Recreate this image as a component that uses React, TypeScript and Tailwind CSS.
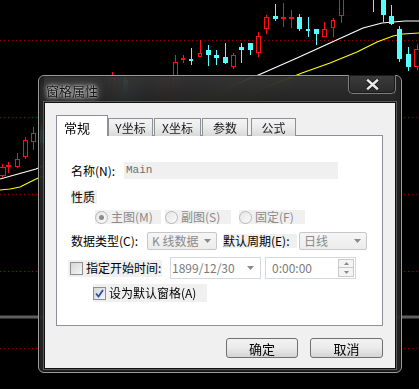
import React from 'react'

type Candle = [number, number, number, number, number, number, 'r' | 'c']

// x, width, bodyTop, bodyBottom, wickTop, wickBottom, colour
const candles: Candle[] = [
  [-1, 7, 167, 176, 164, 178, 'r'],
  [6, 5, 165, 167, 162, 173, 'r'],
  [15, 5, 159, 167, 153, 168, 'r'],
  [23, 5, 140, 157, 137, 159, 'r'],
  [31, 5, 133, 142, 127, 150, 'r'],
  [39, 5, 130, 143, 124, 148, 'c'],
  [109, 6, 78, 104, 72, 108, 'r'],
  [123, 5, 80, 104, 76, 108, 'c'],
  [161, 6, 82, 104, 78, 108, 'r'],
  [173, 5, 62, 90, 55, 95, 'r'],
  [181, 4, 58, 60, 55, 63, 'r'],
  [189, 4, 59, 60, 48, 65, 'c'],
  [198, 4, 53, 57, 40, 57, 'r'],
  [206, 5, 50, 55, 45, 66, 'c'],
  [214, 5, 55, 58, 50, 65, 'c'],
  [223, 5, 57, 63, 43, 64, 'c'],
  [231, 5, 55, 67, 53, 69, 'r'],
  [239, 5, 47, 50, 43, 63, 'c'],
  [248, 5, 43, 50, 43, 55, 'c'],
  [256, 5, 36, 53, 32, 57, 'r'],
  [264, 5, 17, 29, 15, 34, 'r'],
  [273, 5, 16, 19, 4, 21, 'c'],
  [281, 5, 17, 18, 3, 27, 'r'],
  [289, 5, 17, 18, 10, 28, 'r'],
  [297, 5, 17, 29, 14, 31, 'c'],
  [306, 4, 29, 31, 17, 37, 'c'],
  [314, 5, 29, 34, 29, 45, 'c'],
  [322, 5, 29, 37, 22, 37, 'r'],
  [331, 4, 20, 28, 18, 37, 'r'],
  [339, 5, -2, 16, -2, 23, 'r'],
  [372, 3, -2, -1, -2, 12, 'c'],
  [381, 5, -2, 15, -2, 22, 'c'],
  [389, 5, 16, 24, 5, 25, 'c'],
  [397, 5, 29, 59, 26, 62, 'c'],
  [406, 5, 54, 67, 47, 71, 'c'],
  [414, 6, 49, 67, 44, 70, 'r'],
]

const whiteLine = '0,179 36,169 263,73 297,58 330,43 363,28 382,23 405,21 419,21'
const yellowLine = '0,190 10,189 20,187 36,179 302,73 330,63 357,52 377,42 393,36 403,34 419,33'

function Chart() {
  return (
    <svg className="absolute left-0 top-0" width={419} height={389} viewBox="0 0 419 389">
      {[40, 117, 194, 271, 348].map((y) => (
        <line key={y} x1={0} x2={419} y1={y + 0.5} y2={y + 0.5} stroke="#9a0000" strokeDasharray="1 3" />
      ))}
      <line x1={0} x2={419} y1={317} y2={317} stroke="#5e5e5e" strokeWidth={3} />
      <polyline points={whiteLine} fill="none" stroke="#ffffff" strokeWidth={1.2} />
      <polyline points={yellowLine} fill="none" stroke="#ffff00" strokeWidth={1.2} />
      {candles.map(([x, w, top, bottom, wt, wb, c], i) => {
        const mid = x + Math.floor(w / 2) + 0.5
        const color = c === 'r' ? '#ff1010' : '#55ffff'
        const small = bottom - top <= 2
        return (
          <g key={i}>
            <line x1={mid} x2={mid} y1={wt} y2={wb} stroke={color} />
            {c === 'r' && !small ? (
              <rect x={x + 0.5} y={top + 0.5} width={w - 1} height={bottom - top - 1} fill="#000" stroke={color} />
            ) : (
              <rect x={x} y={top} width={w} height={Math.max(bottom - top, 2)} fill={color} />
            )}
          </g>
        )
      })}
    </svg>
  )
}

function Radio({ label, checked }: { label: string; checked?: boolean }) {
  return (
    <div className="flex items-center h-[14px] w-[66px] bg-[#f0f0f0] text-[#8a8a8a]">
      <div className="flex items-center justify-center w-[13px] h-[13px] rounded-full border border-[#b8b8b8] bg-gradient-to-br from-[#e6e6e6] to-[#fafafa]">
        {checked && <div className="w-[5px] h-[5px] rounded-full bg-[#8c8c8c]" />}
      </div>
      <span className="ml-[3px]">{label}</span>
    </div>
  )
}

function Check({ checked }: { checked?: boolean }) {
  return (
    <div className="flex items-center justify-center w-[13px] h-[13px] border border-[#8e8f8f] bg-white">
      <div className="flex items-center justify-center w-[11px] h-[11px] bg-gradient-to-br from-[#d6d6d6] to-[#f6f6f6]">
        {checked && (
          <svg width="9" height="9" viewBox="0 0 9 9">
            <path d="M1 4.5 L3.5 7.5 L8 1" fill="none" stroke="#2a4fa8" strokeWidth="1.8" />
          </svg>
        )}
      </div>
    </div>
  )
}

function Arrow() {
  return (
    <svg width="7" height="4" viewBox="0 0 7 4">
      <path d="M0 0 L7 0 L3.5 4 Z" fill="#8a8a8a" />
    </svg>
  )
}

function Combo({ text, width }: { text: string; width: string }) {
  return (
    <div className={`flex items-center justify-between h-[18px] ${width} rounded-[2px] border border-[#c7c7c7] bg-gradient-to-b from-[#f6f6f6] to-[#ececec] pl-[4px] pr-[5px] text-[#8a8a8a]`}>
      <span>{text}</span>
      <Arrow />
    </div>
  )
}

function Tab({ label, width, ml }: { label: string; width: string; ml: string }) {
  return (
    <div className={`flex items-center justify-center h-[18px] ${width} ${ml} border border-b-0 border-[#8e9097] bg-gradient-to-b from-[#f4f4f4] via-[#ebebeb] to-[#d9d9d9] text-[#1a1a1a]`}>
      {label}
    </div>
  )
}

export default function App() {
  return (
    <div className="relative w-[419px] h-[389px] bg-black overflow-hidden font-['Noto_Sans_CJK_SC',sans-serif] text-[12px] leading-none">
      <Chart />

      <div className="absolute left-[38px] top-[75px] w-[364px] h-[298px] flex flex-col px-[5px] pb-[3px] rounded-[6px] border border-[#9c9c9c] bg-[rgba(42,42,42,0.84)] backdrop-blur-[10px] shadow-[inset_0_0_0_1px_#141414]">
        {/* Title bar */}
        <div className="flex justify-between h-[26px] bg-gradient-to-b from-[rgba(255,255,255,0.07)] to-transparent">
          <span className="pt-[8px] pl-[2px] text-[13px] text-[#141414] [text-shadow:0_0_2px_#d8d8d8,0_0_4px_#bdbdbd,0_0_8px_#9a9a9a,0_0_12px_#7a7a7a]">窗格属性</span>
          <div className="flex items-center justify-center -mt-px w-[48px] h-[19px] rounded-b-[5px] border border-t-0 border-[#7e7e7e] bg-gradient-to-b from-[#3c3c3c] to-[#2a2a2a] shadow-[inset_0_0_0_1px_#1a1a1a]">
            <svg width="13" height="11" viewBox="0 0 13 11">
              <path d="M2 1.5 L11 9.5 M11 1.5 L2 9.5" stroke="#1c1c1c" strokeWidth="4.2" strokeLinecap="square" />
              <path d="M2 1.5 L11 9.5 M11 1.5 L2 9.5" stroke="#ececec" strokeWidth="2.4" strokeLinecap="square" />
            </svg>
          </div>
        </div>

        {/* Client area */}
        <div className="flex-1 flex flex-col border border-[#111] bg-[#f0f0f0] pl-[11px] pr-[12px] pt-[12px] shadow-[0_0_0_1px_rgba(190,190,190,0.35)]">
          <div className="flex items-end h-[21px] -mb-px relative z-10">
            <div className="flex items-start h-[21px] w-[52px] pl-[7px] pt-[5px] border border-b-0 border-[#8e9097] bg-white text-[13px] text-black">常规</div>
            <Tab label="Y坐标" width="w-[45px]" ml="ml-0" />
            <Tab label="X坐标" width="w-[47px]" ml="ml-[1px]" />
            <Tab label="参数" width="w-[46px]" ml="ml-[1px]" />
            <Tab label="公式" width="w-[45px]" ml="ml-[3px]" />
          </div>

          <div className="flex flex-col h-[191px] border border-[#8e9097] bg-white pl-[14px] text-black">
            <div className="flex items-center h-[17px] mt-[26px]">
              <span className="w-[53px]">名称(N):</span>
              <div className="flex items-center w-[214px] h-[17px] bg-[#f0f0f0] pl-[2px] font-['Liberation_Mono',monospace] text-[11px] text-[#6d6d6d]">Main</div>
            </div>

            <div className="flex items-center h-[14px] w-[26px] mt-[11px] bg-[#f0f0f0]">性质</div>

            <div className="flex items-center mt-[6px] pl-[24px]">
              <Radio label="主图(M)" checked />
              <div className="ml-[4px]"><Radio label="副图(S)" /></div>
              <div className="ml-[8px]"><Radio label="固定(F)" /></div>
            </div>

            <div className="flex items-center h-[18px] mt-[8px]">
              <span className="w-[76px]">数据类型(C):</span>
              <Combo text="K 线数据" width="w-[70px]" />
              <span className="ml-[6px] w-[74px] h-[14px] flex items-center bg-[#f0f0f0]">默认周期(E):</span>
              <div className="ml-[2px]"><Combo text="日线" width="w-[68px]" /></div>
            </div>

            <div className="flex items-center h-[22px] mt-[7px]">
              <div className="flex items-center h-[17px] w-[94px] -ml-[3px] pl-[2px] bg-[#f0f0f0]">
                <Check />
                <span className="ml-[3px]">指定开始时间:</span>
              </div>
              <div className="flex items-center justify-between ml-[8px] w-[91px] h-[22px] border border-[#d3d9de] bg-white pl-[1px] pr-[6px] text-[#7a7a7a]">
                <span>1899/12/30</span>
                <Arrow />
              </div>
              <div className="flex items-center justify-between ml-[4px] w-[91px] h-[22px] border border-[#d3d9de] bg-white pl-[6px] pr-[1px] text-[#7a7a7a]">
                <span>0:00:00</span>
                <div className="flex flex-col">
                  <div className="flex items-center justify-center w-[16px] h-[9px] border border-[#c9c9c9] bg-[#f4f4f4]">
                    <svg width="5" height="3" viewBox="0 0 5 3"><path d="M0 3 L5 3 L2.5 0 Z" fill="#8a8a8a" /></svg>
                  </div>
                  <div className="flex items-center justify-center w-[16px] h-[9px] border border-t-0 border-[#c9c9c9] bg-[#f4f4f4]">
                    <svg width="5" height="3" viewBox="0 0 5 3"><path d="M0 0 L5 0 L2.5 3 Z" fill="#8a8a8a" /></svg>
                  </div>
                </div>
              </div>
            </div>

            <div className="flex items-center h-[18px] w-[114px] mt-[5px] ml-[22px] bg-[#f0f0f0]">
              <Check checked />
              <span className="ml-[3px]">设为默认窗格(A)</span>
            </div>
          </div>

          <div className="flex justify-end gap-[12px] mt-[12px]">
            <button className="w-[72px] h-[20px] rounded-[3px] border border-[#707070] bg-gradient-to-b from-[#f2f2f2] via-[#ebebeb] to-[#d4d4d4] text-[13px] text-black">确定</button>
            <button className="w-[73px] h-[20px] rounded-[3px] border border-[#707070] bg-gradient-to-b from-[#f2f2f2] via-[#ebebeb] to-[#d4d4d4] text-[13px] text-black">取消</button>
          </div>
        </div>
      </div>
    </div>
  )
}
